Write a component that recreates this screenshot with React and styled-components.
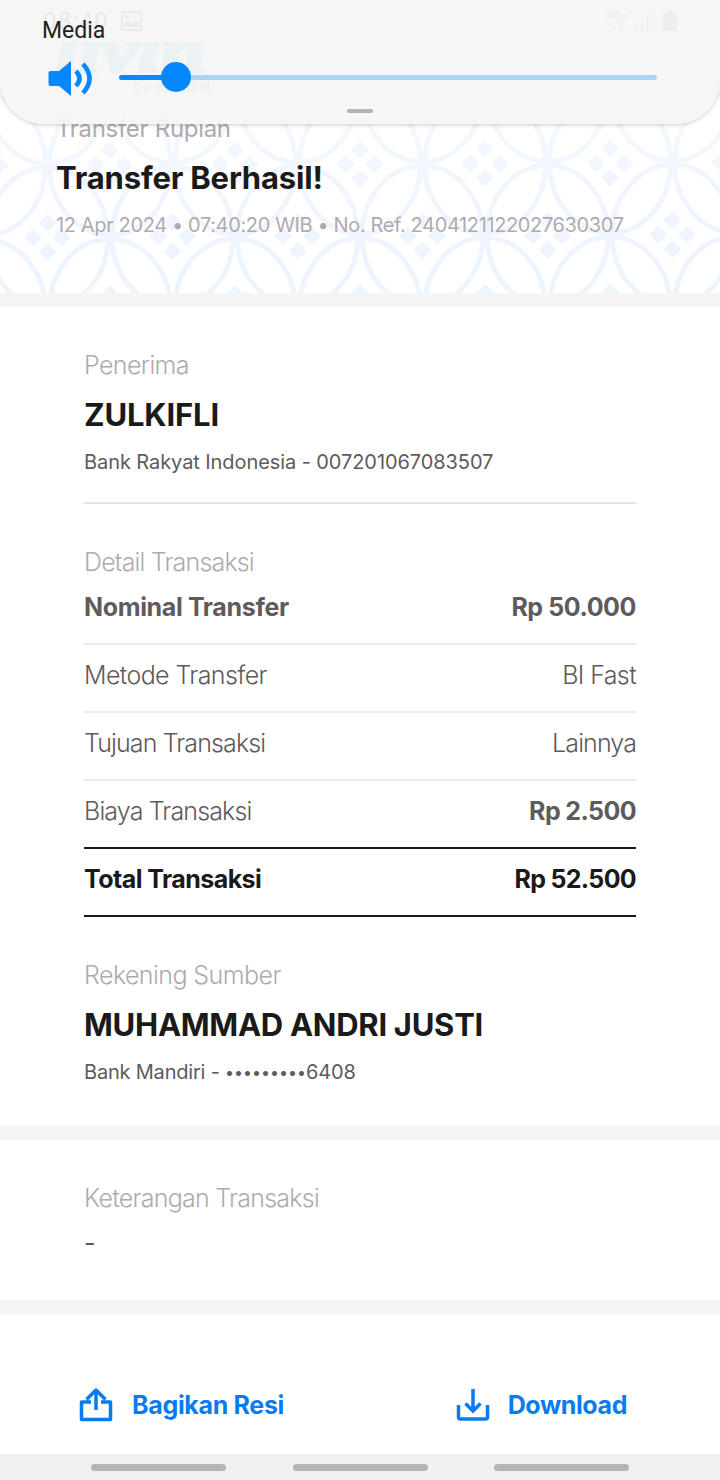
import React from "react";
import styled, { createGlobalStyle } from "styled-components";

const Global = createGlobalStyle`
  * { box-sizing: border-box; }
  body { margin: 0; background: #fff; }
`;

const Screen = styled.div`
  position: relative;
  width: 720px;
  height: 1480px;
  overflow: hidden;
  display: flex;
  flex-direction: column;
  background: #fff;
  font-family: Inter, sans-serif;
`;

const Text = styled.span`
  display: block;
  white-space: nowrap;
  font-size: ${(p) => p.$size || 25}px;
  font-weight: ${(p) => p.$weight || 300};
  line-height: ${(p) => p.$line || 32}px;
  letter-spacing: ${(p) => p.$track || 0}px;
  color: ${(p) => p.$color || "#5f5a5b"};
`;

const Dots = styled.span`
  font-size: 16px;
  line-height: 1;
  letter-spacing: 0;
  vertical-align: 1px;
`;

const Hero = styled.header`
  position: relative;
  height: 293px;
  padding: 0 56px;
  overflow: hidden;
  display: flex;
  flex-direction: column;
`;

const PatternArt = styled.svg`
  position: absolute;
  inset: 0;
`;

const StatusBar = styled.div`
  position: relative;
  height: 42px;
  margin: 0 -18px 0 -13px;
  display: flex;
  align-items: center;
  color: #555;
`;

const Clock = styled.span`
  font: 400 24px/42px Roboto, sans-serif;
  letter-spacing: 1.2px;
  width: 78px;
`;

const StatusIcons = styled.svg`
  margin-left: auto;
`;

const Brand = styled.div`
  position: relative;
  height: 74px;
`;

const HeroText = styled.div`
  position: relative;
  display: flex;
  flex-direction: column;
`;

const Band = styled.div`
  flex: none;
  height: 14px;
  background: #f5f5f5;
`;

const Section = styled.section`
  flex: none;
  height: ${(p) => p.$height}px;
  padding: ${(p) => p.$top}px 84px 0;
`;

const Party = styled.div`
  display: flex;
  flex-direction: column;
  height: ${(p) => p.$height}px;
  border-bottom: ${(p) => (p.$ruled ? "2px solid #e3e3e3" : "none")};
`;

const Details = styled.div`
  padding-top: 42px;
  margin-bottom: 42px;
`;

const Row = styled.div`
  display: flex;
  justify-content: space-between;
  align-items: center;
  height: ${(p) => (p.$first ? 67 : 68)}px;
  padding-bottom: ${(p) => (p.$first ? 7 : 6)}px;
  border-bottom: 2px solid ${(p) => (p.$strong ? "#1a1a1a" : "#ececec")};
`;

const Actions = styled.footer`
  flex: none;
  height: 140px;
  padding: 67px 93px 0 76px;
  display: flex;
  justify-content: space-between;
`;

const Action = styled.button`
  display: flex;
  align-items: center;
  gap: 16px;
  height: 48px;
  padding: 0;
  border: 0;
  background: none;
  font-family: inherit;
`;

const NavBar = styled.nav`
  flex: none;
  height: 26px;
  display: flex;
  justify-content: space-between;
  align-items: center;
  padding: 0 91px;
  background: #f1f1f1;
`;

const NavPill = styled.span`
  width: 135px;
  height: 7px;
  border-radius: 4px;
  background: #b4b4b4;
`;

const VolumePanel = styled.div`
  position: absolute;
  left: 0;
  top: 0;
  width: 720px;
  height: 124px;
  padding: 16px 42px 0;
  border-radius: 0 0 44px 44px;
  background: rgba(245, 245, 245, 0.92);
  box-shadow: 0 1px 4px rgba(0, 0, 0, 0.2);
`;

const PanelTitle = styled.div`
  font: 400 23px/30px Roboto, sans-serif;
  color: #222;
`;

const VolumeRow = styled.div`
  display: flex;
  align-items: center;
  height: 63px;
  padding-left: 5px;
`;

const Track = styled.div`
  display: flex;
  align-items: center;
  width: 538px;
  height: 5px;
  margin: 0 0 1px 24px;
  border-radius: 3px;
  background: linear-gradient(to right, #0a89ff 58px, #a9d3f8 58px);
`;

const Knob = styled.span`
  width: 30px;
  height: 30px;
  margin-left: 42px;
  border-radius: 50%;
  background: #0588ff;
`;

const Handle = styled.div`
  width: 26px;
  height: 4px;
  margin: 0 auto;
  border-radius: 2px;
  background: #b3b3b3;
`;

const KawungPattern = () => {
  const cells = [];
  for (let row = -1; row < 4; row += 1) {
    for (let col = -1; col < 7; col += 1) {
      const x = (row % 2 ? 110 : 47.5) + col * 125;
      cells.push([x, 93.5 + row * 72 - x * 0.004]);
    }
  }
  return (
    <PatternArt width="720" height="293">
      <defs>
        <linearGradient id="fade" x1="0" y1="0" x2="0" y2="293" gradientUnits="userSpaceOnUse">
          <stop offset="0.3" stopColor="#f6f9fe" />
          <stop offset="0.6" stopColor="#f1f6fe" />
          <stop offset="1" stopColor="#ecf4fe" />
        </linearGradient>
      </defs>
      {cells.map(([x, y]) => (
        <g key={`${x}-${y}`}>
          <ellipse cx={x} cy={y} rx="60.5" ry="70" fill="none" stroke="url(#fade)" strokeWidth="5" />
          <path
            d={[[0, -14.5], [0, 14.5], [-14.5, 0], [14.5, 0]]
              .map(([dx, dy]) => `M${x + dx} ${y + dy - 8.5}l8.5 8.5l-8.5 8.5l-8.5-8.5z`)
              .join("")}
            fill="url(#fade)"
            stroke="url(#fade)"
            strokeWidth="1"
            strokeLinejoin="round"
          />
        </g>
      ))}
    </PatternArt>
  );
};

const rows = [
  { label: "Nominal Transfer", value: "Rp 50.000", bold: true, boldValue: true, first: true, lt: -0.35, vt: -0.42 },
  { label: "Metode Transfer", value: "BI Fast", lt: -0.6, vt: -0.6 },
  { label: "Tujuan Transaksi", value: "Lainnya", lt: -0.88, vt: -0.88 },
  { label: "Biaya Transaksi", value: "Rp 2.500", boldValue: true, strong: true, lt: -0.86, vt: -0.6 },
  { label: "Total Transaksi", value: "Rp 52.500", bold: true, boldValue: true, strong: true, dark: true, lt: -0.55, vt: -0.68 },
];

export default function App() {
  return (
    <>
      <Global />
      <Screen>
        <Hero>
          <KawungPattern />
          <StatusBar>
            <Clock>08:40</Clock>
            <svg width="21" height="20" viewBox="0 0 21 20">
              <path fillRule="evenodd" fill="#777" d="M2 0h17q2 0 2 2v16q0 2-2 2h-17q-2 0-2-2V2q0-2 2-2zM2 2v16h17V2zM3 16V13l4-3 4 3 4-4 3 3v4z" />
              <circle cx="6" cy="6" r="1.8" fill="#777" />
            </svg>
            <StatusIcons width="76" height="24" viewBox="0 0 76 24">
              <text x="0" y="10" fontSize="11" fontWeight="700" fontFamily="Roboto" textLength="21" fill="#888">4G+</text>
              <path d="M7.500 13v8M4.500 18l3 3 3-3M15 21v-8M12 16l3-3 3 3" fill="none" stroke="#bbb" strokeWidth="2" />
              <path d="M31 22v-5M36 22v-10M41.500 22v-16" stroke="#999" strokeWidth="2" />
              <path d="M47 22v-20" stroke="#d2d2d2" strokeWidth="2" />
              <path d="M57 22V4h4V1h6v3h4v18z" fill="#999" />
            </StatusIcons>
          </StatusBar>
          <Brand>
            <svg width="160" height="56" viewBox="0 0 160 56">
              <text x="0" y="30" textLength="150" lengthAdjust="spacingAndGlyphs" fontFamily="Liberation Serif" fontStyle="italic" fontWeight="700" fontSize="64" fill="#7fb8d4" stroke="#7fb8d4" strokeWidth="3">livin</text>
              <text x="78" y="50" fontFamily="Inter" fontSize="14.500" fill="#999" textLength="76">by <tspan fontWeight="700">mandiri</tspan></text>
            </svg>
          </Brand>
          <HeroText>
            <Text $size={24} $color="#b0aab0" $line={26} $track={-0.3} $weight={400}>Transfer Rupiah</Text>
            <Text $size={31} $weight={700} $color="#1a1a1a" $line={72} $track={-0.18}>Transfer Berhasil!</Text>
            <Text $size={20} $color="#b0aab0" $line={23} $weight={400} $track={-0.37}>12 Apr 2024 • 07:40:20 WIB • No. Ref. 2404121122027630307</Text>
          </HeroText>
        </Hero>
        <Band />
        <Section $height={819} $top={42}>
          <Party $height={155} $ruled>
            <Text $color="#b0aab0" $track={-0.62}>Penerima</Text>
            <Text $size={31} $weight={700} $color="#1a1a1a" $line={68} $track={-0.15}>ZULKIFLI</Text>
            <Text $size={20} $line={26} $weight={400} $track={-0.08}>Bank Rakyat Indonesia - 007201067083507</Text>
          </Party>
          <Details>
            <Text $color="#b0aab0" $track={-0.82}>Detail Transaksi</Text>
            {rows.map((r) => (
              <Row key={r.label} $first={r.first} $strong={r.strong}>
                <Text $weight={r.bold ? 700 : 300} $color={r.dark ? "#1a1a1a" : undefined} $track={r.lt}>{r.label}</Text>
                <Text $weight={r.boldValue ? 700 : 300} $color={r.dark ? "#1a1a1a" : undefined} $track={r.vt}>{r.value}</Text>
              </Row>
            ))}
          </Details>
          <Party $height={140}>
            <Text $color="#b0aab0" $track={-0.57}>Rekening Sumber</Text>
            <Text $size={31} $weight={700} $color="#1a1a1a" $line={68} $track={-0.28}>MUHAMMAD ANDRI JUSTI</Text>
            <Text $size={20} $line={26} $weight={400} $track={-0.2}>Bank Mandiri - <Dots>•••••••••</Dots>6408</Text>
          </Party>
        </Section>
        <Band />
        <Section $height={160} $top={42}>
          <Text $color="#b0aab0" $track={-0.74}>Keterangan Transaksi</Text>
          <Text $line={58} $weight={400}>-</Text>
        </Section>
        <Band />
        <Actions>
          <Action>
            <svg width="40" height="40" viewBox="0 0 40 40" fill="none" stroke="#077cf0" strokeWidth="3.500">
              <path d="M15 17H5.500V34.500H34.500V17H25M20 25V6M10.500 14.500L20 5L29.500 14.500" strokeLinejoin="round" />
            </svg>
            <Text $weight={700} $color="#077cf0" $track={-0.32}>Bagikan Resi</Text>
          </Action>
          <Action>
            <svg width="40" height="40" viewBox="0 0 40 40" fill="none" stroke="#077cf0" strokeWidth="3.500">
              <path d="M6.500 20V32Q6.500 34 8.500 34H33.500Q35.500 34 35.500 32V20M21 4V25M13.500 18.500L21 26L28.500 18.500" />
            </svg>
            <Text $weight={700} $color="#077cf0" $track={-0.4}>Download</Text>
          </Action>
        </Actions>
        <NavBar>
          <NavPill />
          <NavPill />
          <NavPill />
        </NavBar>
        <VolumePanel>
          <PanelTitle>Media</PanelTitle>
          <VolumeRow>
            <svg width="48" height="38" viewBox="0 0 48 38">
              <path d="M3.500 12H12L24 2V37L12 27H3.500Q1.500 27 1.500 25V14Q1.500 12 3.500 12Z" fill="#0588ff" />
              <path d="M29 12Q36 19.500 29 27M36 5Q49 19.500 36 34" fill="none" stroke="#0588ff" strokeWidth="4.500" />
            </svg>
            <Track>
              <Knob />
            </Track>
          </VolumeRow>
          <Handle />
        </VolumePanel>
      </Screen>
    </>
  );
}
